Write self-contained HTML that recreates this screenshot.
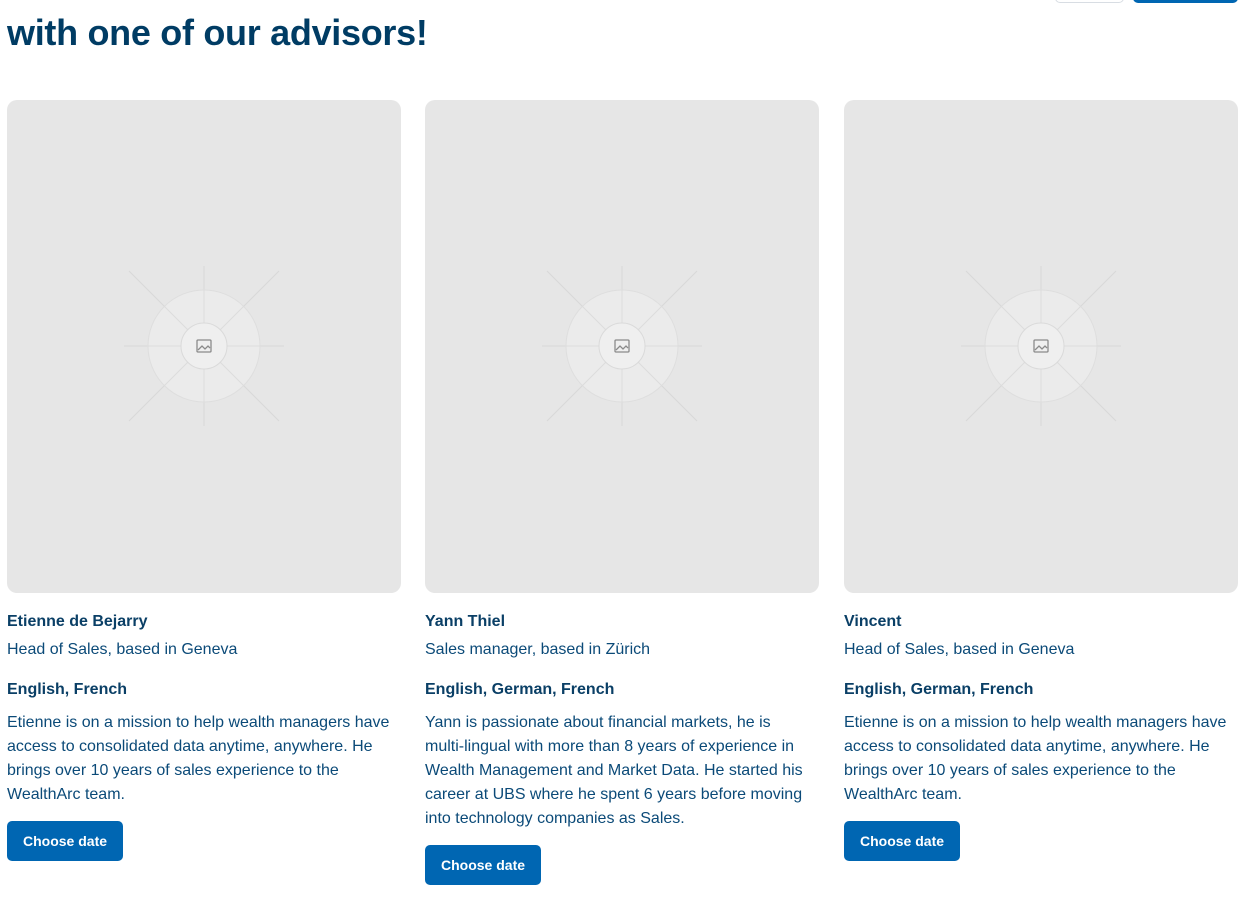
<!DOCTYPE html>
<html><head><meta charset="utf-8"><style>
*{margin:0;padding:0;box-sizing:border-box}
body{width:1249px;height:900px;overflow:hidden;background:#fff;font-family:"Liberation Sans",sans-serif;color:#0b4a78;position:relative}
h1{position:absolute;left:7px;top:12px;font-size:36px;font-weight:700;color:#003c64;letter-spacing:-0.3px}
.tb1{position:absolute;left:1055px;top:-10px;width:69px;height:13px;border:1px solid #d8dde3;border-radius:5px}
.tb2{position:absolute;left:1133px;top:-10px;width:105px;height:13px;background:#0066b2;border-radius:5px}
.card{position:absolute;top:100px;width:394px}
.img{width:100%;height:493px;background:#e6e6e6;border-radius:10px;position:relative;overflow:hidden}
.img svg{position:absolute;left:117px;top:166px}
.name{margin-top:19px;font-size:16px;font-weight:700;color:#0a3f66;line-height:20px}
.role{margin-top:8px;font-size:16px;line-height:20px}
.lang{margin-top:20px;font-size:16px;font-weight:700;color:#0a3f66;line-height:20px}
.desc{margin-top:11px;font-size:16px;line-height:24px;width:386px}
.btn{display:inline-block;margin-top:14px;background:#0066b2;color:#fff;font-size:14px;font-weight:700;padding:0 16px;height:40px;line-height:40px;border-radius:5px}
</style></head><body>
<div class="tb1"></div><div class="tb2"></div>
<h1>with one of our advisors!</h1>

<div class="card" style="left:7px">
<div class="img"><svg width="160" height="160" viewBox="0 0 160 160"><g stroke="#d8d8d8" stroke-width="1" fill="none"><line x1="0" y1="80" x2="160" y2="80"/><line x1="80" y1="0" x2="80" y2="160"/><line x1="5" y1="5" x2="155" y2="155"/><line x1="155" y1="5" x2="5" y2="155"/></g><circle cx="80" cy="80" r="56" fill="#ebebeb" stroke="#dedede"/><g stroke="#dcdcdc"><line x1="24" y1="80" x2="136" y2="80"/><line x1="80" y1="24" x2="80" y2="136"/><line x1="40" y1="40" x2="120" y2="120"/><line x1="120" y1="40" x2="40" y2="120"/></g><circle cx="80" cy="80" r="23" fill="#efefef" stroke="#dadada"/><g fill="none" stroke="#8a8a8a" stroke-width="1.3"><rect x="73" y="74" width="14" height="12" rx="1"/><path d="M74 84 l4-4 l3 3 l3-3 l2 2"/></g></svg></div>
<div class="name">Etienne de Bejarry</div>
<div class="role">Head of Sales, based in Geneva</div>
<div class="lang">English, French</div>
<div class="desc">Etienne is on a mission to help wealth managers have access to consolidated data anytime, anywhere. He brings over 10 years of sales experience to the WealthArc team.</div>
<div class="btn">Choose date</div>
</div>

<div class="card" style="left:425px">
<div class="img"><svg width="160" height="160" viewBox="0 0 160 160"><g stroke="#d8d8d8" stroke-width="1" fill="none"><line x1="0" y1="80" x2="160" y2="80"/><line x1="80" y1="0" x2="80" y2="160"/><line x1="5" y1="5" x2="155" y2="155"/><line x1="155" y1="5" x2="5" y2="155"/></g><circle cx="80" cy="80" r="56" fill="#ebebeb" stroke="#dedede"/><g stroke="#dcdcdc"><line x1="24" y1="80" x2="136" y2="80"/><line x1="80" y1="24" x2="80" y2="136"/><line x1="40" y1="40" x2="120" y2="120"/><line x1="120" y1="40" x2="40" y2="120"/></g><circle cx="80" cy="80" r="23" fill="#efefef" stroke="#dadada"/><g fill="none" stroke="#8a8a8a" stroke-width="1.3"><rect x="73" y="74" width="14" height="12" rx="1"/><path d="M74 84 l4-4 l3 3 l3-3 l2 2"/></g></svg></div>
<div class="name">Yann Thiel</div>
<div class="role">Sales manager, based in Zürich</div>
<div class="lang">English, German, French</div>
<div class="desc">Yann is passionate about financial markets, he is<br>multi&#8209;lingual with more than 8 years of experience in<br>Wealth Management and Market Data. He started his<br>career at UBS where he spent 6 years before moving<br>into technology companies as Sales.</div>
<div class="btn">Choose date</div>
</div>

<div class="card" style="left:844px">
<div class="img"><svg width="160" height="160" viewBox="0 0 160 160"><g stroke="#d8d8d8" stroke-width="1" fill="none"><line x1="0" y1="80" x2="160" y2="80"/><line x1="80" y1="0" x2="80" y2="160"/><line x1="5" y1="5" x2="155" y2="155"/><line x1="155" y1="5" x2="5" y2="155"/></g><circle cx="80" cy="80" r="56" fill="#ebebeb" stroke="#dedede"/><g stroke="#dcdcdc"><line x1="24" y1="80" x2="136" y2="80"/><line x1="80" y1="24" x2="80" y2="136"/><line x1="40" y1="40" x2="120" y2="120"/><line x1="120" y1="40" x2="40" y2="120"/></g><circle cx="80" cy="80" r="23" fill="#efefef" stroke="#dadada"/><g fill="none" stroke="#8a8a8a" stroke-width="1.3"><rect x="73" y="74" width="14" height="12" rx="1"/><path d="M74 84 l4-4 l3 3 l3-3 l2 2"/></g></svg></div>
<div class="name">Vincent</div>
<div class="role">Head of Sales, based in Geneva</div>
<div class="lang">English, German, French</div>
<div class="desc">Etienne is on a mission to help wealth managers have access to consolidated data anytime, anywhere. He brings over 10 years of sales experience to the WealthArc team.</div>
<div class="btn">Choose date</div>
</div>
</body></html>
